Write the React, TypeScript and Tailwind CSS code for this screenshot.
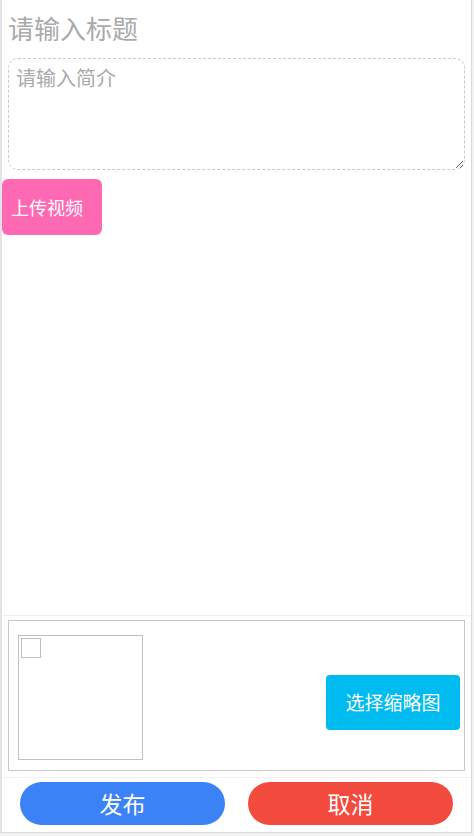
import { useState } from "react";

const cjk = "font-['Microsoft_YaHei','Noto_Sans_CJK_SC',sans-serif]";

export default function App() {
  const [title, setTitle] = useState("");
  const [intro, setIntro] = useState("");

  return (
    <div className={`w-[474px] h-[836px] bg-[#f2f2f2] ${cjk}`}>
      <div className="flex flex-col w-[472px] h-[833px] bg-white border-l-2 border-l-[#e4e4e4] border-r border-b border-[#d9d9d9]">
        {/* 标题 / 简介 / 上传 */}
        <input
          value={title}
          onChange={(e) => setTitle(e.target.value)}
          placeholder="请输入标题"
          className="mt-[10px] h-[36px] px-[6px] text-[26px] leading-[36px] text-[#333] placeholder:text-[#aaaaaa] outline-none bg-transparent"
        />
        <textarea
          value={intro}
          onChange={(e) => setIntro(e.target.value)}
          placeholder="请输入简介"
          className="mt-[12px] ml-[6px] w-[457px] h-[112px] border border-dashed border-[#c8c8c8] rounded-[10px] px-[7px] pt-[5px] text-[20px] leading-[28px] text-[#333] placeholder:text-[#aaaaaa] outline-none"
        />
        <button className="mt-[9px] w-[100px] h-[56px] rounded-[6px] bg-[#ff69b4] pl-[9px] text-left text-[18px] text-white">
          上传视频
        </button>

        <div className="flex-1" />

        {/* 缩略图 */}
        <div className="border-t border-[#f0f0f0] pt-[4px]">
          <div className="mx-[6px] h-[151px] border border-[#c8c8c8] flex items-start pl-[9px] pt-[14px] pr-[4px]">
            <div className="w-[125px] h-[125px] border border-[#c0c0c0] p-[2px]">
              <div className="w-[20px] h-[20px] border border-[#c0c0c0]" />
            </div>
            <button className="ml-auto mt-[40px] w-[134px] h-[55px] rounded-[4px] bg-[#00bbef] text-[19px] text-white">
              选择缩略图
            </button>
          </div>
        </div>

        {/* 发布 / 取消 */}
        <div className="mt-[6px] border-t border-[#f0f0f0] pt-[4px] pb-[7px] px-[18px] grid grid-cols-2 gap-[23px]">
          <button className="h-[43px] rounded-full bg-[#3b82f6] text-[23px] text-white">发布</button>
          <button className="h-[43px] rounded-full bg-[#f24a3c] text-[23px] text-white">取消</button>
        </div>
      </div>
    </div>
  );
}
